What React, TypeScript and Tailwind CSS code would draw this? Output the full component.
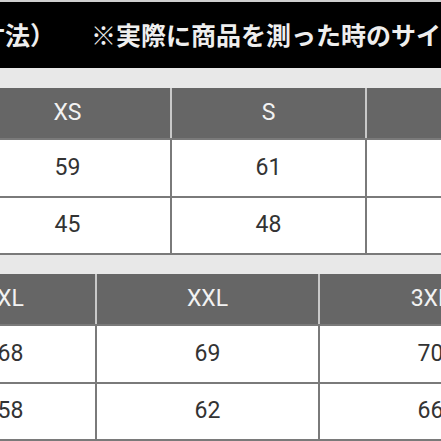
import React from "react";

const font = { fontFamily: "Roboto, 'Noto Sans', sans-serif" };

function Table({ widths, headers, rows, offset }: { widths: number[]; headers: string[]; rows: string[][]; offset: string }) {
  return (
    <div className={`flex flex-col ${offset}`}>
      <div className="flex h-[50px] bg-[#666666]">
        {headers.map((h, i) => (
          <div
            key={i}
            className="flex shrink-0 items-center justify-center border-r-2 border-[#c9c9c9] text-[23px] text-[#f2f2f2]"
            style={{ width: widths[i] }}
          >
            {h}
          </div>
        ))}
      </div>
      {rows.map((r, ri) => (
        <div key={ri} className={`flex border-t-2 border-[#7a7a7a] bg-white ${ri === 0 ? "h-[58px]" : "h-[57px]"}`}>
          {r.map((c, i) => (
            <div
              key={i}
              className="flex shrink-0 items-center justify-center border-r-2 border-[#7a7a7a] text-[23px] text-[#333333]"
              style={{ width: widths[i] }}
            >
              {c}
            </div>
          ))}
        </div>
      ))}
      <div className="h-[2px] bg-[#7a7a7a]" />
    </div>
  );
}

export default function App() {
  return (
    <div className="h-[441px] w-[441px] overflow-hidden bg-[#e8e8e8]" style={font}>
      <div className="h-[2px] bg-[#cfcfcf]" />
      <div
        className="flex h-[66px] items-center whitespace-nowrap bg-black text-[25px] font-bold text-[#eeeeee]"
        style={{ fontFamily: "'Noto Sans CJK JP', sans-serif" }}
      >
        <span className="ml-[-20px] shrink-0">寸法）</span>
        <span className="ml-[36px] shrink-0">※実際に商品を測った時のサイズ</span>
      </div>
      <div className="h-[20px]" />
      <Table
        offset="ml-[-35px]"
        widths={[207, 195, 195]}
        headers={["XS", "S", ""]}
        rows={[
          ["59", "61", ""],
          ["45", "48", ""],
        ]}
      />
      <div className="h-[19px]" />
      <Table
        offset="ml-[-74px]"
        widths={[171, 223, 223]}
        headers={["XL", "XXL", "3XL"]}
        rows={[
          ["68", "69", "70"],
          ["58", "62", "66"],
        ]}
      />
    </div>
  );
}
